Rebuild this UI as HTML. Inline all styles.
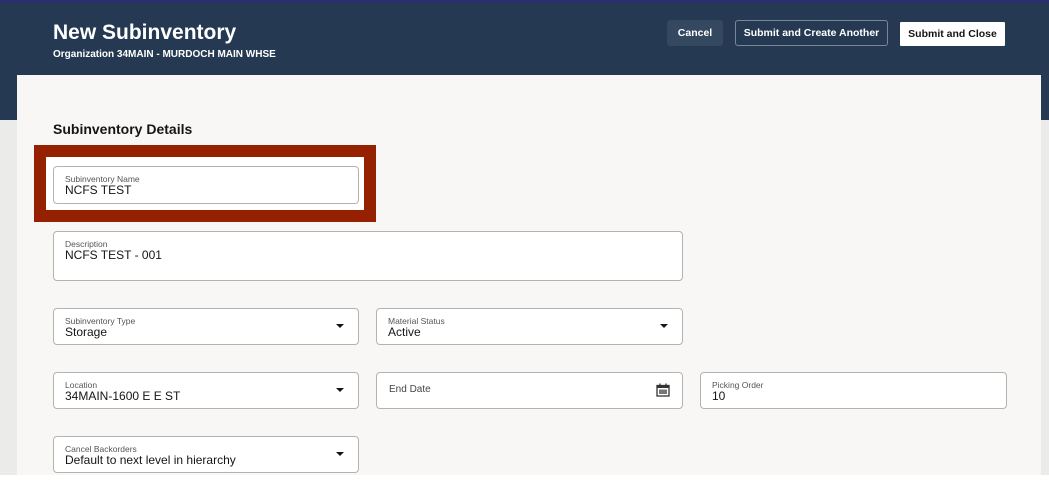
<!DOCTYPE html>
<html><head><meta charset="utf-8"><style>
*{box-sizing:border-box;margin:0;padding:0}
body{width:1049px;height:480px;overflow:hidden;background:#ebebea;font-family:"Liberation Sans",sans-serif;position:relative}
.top{position:absolute;left:0;top:0;width:1049px;height:3px;background:#2b2f72}
.hdr{position:absolute;left:0;top:3px;width:1049px;height:117px;background:#253a52}
.card{position:absolute;left:17px;top:75px;width:1024px;height:400px;background:#f8f7f5}
.bot{position:absolute;left:0;top:475px;width:1049px;height:5px;background:#fff}
h1{position:absolute;left:53px;top:21px;color:#fff;font-size:21px;font-weight:bold}
.org{position:absolute;left:53px;top:49px;color:#fff;font-size:10px;font-weight:bold}
.btn{position:absolute;font-size:10.5px;font-weight:bold;display:flex;align-items:center;justify-content:center;border-radius:3px}
h2{position:absolute;left:53px;top:121px;font-size:14px;font-weight:bold;color:#161513}
.red{position:absolute;left:34px;top:145px;width:342px;height:77px;background:#952100}
.redin{position:absolute;left:46px;top:157px;width:318px;height:53px;background:#fff}
.f{position:absolute;background:#fff;border:1px solid #b5b3b0;border-radius:4px}
.f .l{position:absolute;left:11px;top:7px;font-size:8.5px;color:#555}
.f .v{position:absolute;left:11px;top:16px;font-size:12px;color:#161513}
.f .c{position:absolute;left:12px;top:11px;font-size:10px;color:#444}
.dd{position:absolute;right:14px;top:15px;width:0;height:0;border-left:4px solid transparent;border-right:4px solid transparent;border-top:4px solid #161513}
</style></head><body>
<div class="top"></div><div class="hdr"></div><div class="card"></div><div class="bot"></div>
<h1>New Subinventory</h1>
<div class="org">Organization 34MAIN - MURDOCH MAIN WHSE</div>
<div class="btn" style="left:667px;top:20px;width:56px;height:26px;background:#34495f;color:#fff">Cancel</div>
<div class="btn" style="left:735px;top:20px;width:153px;height:26px;border:1px solid #7b8796;color:#fff">Submit and Create Another</div>
<div class="btn" style="left:900px;top:22px;width:105px;height:24px;background:#fff;color:#161513;border-radius:1px">Submit and Close</div>
<h2>Subinventory Details</h2>
<div class="red"></div><div class="redin"></div>
<div class="f" style="left:53px;top:166px;width:306px;height:38px"><div class="l">Subinventory Name</div><div class="v">NCFS TEST</div></div>
<div class="f" style="left:53px;top:231px;width:630px;height:50px"><div class="l">Description</div><div class="v">NCFS TEST - 001</div></div>
<div class="f" style="left:53px;top:308px;width:306px;height:37px"><div class="l">Subinventory Type</div><div class="v">Storage</div><div class="dd"></div></div>
<div class="f" style="left:376px;top:308px;width:307px;height:37px"><div class="l">Material Status</div><div class="v">Active</div><div class="dd"></div></div>
<div class="f" style="left:53px;top:372px;width:306px;height:37px"><div class="l">Location</div><div class="v">34MAIN-1600 E E ST</div><div class="dd"></div></div>
<div class="f" style="left:376px;top:372px;width:307px;height:37px"><div class="c">End Date</div>
<svg style="position:absolute;right:12px;top:10px" width="14" height="14" viewBox="0 0 14 14"><rect x="1" y="2.5" width="12" height="10.5" fill="none" stroke="#333" stroke-width="1.3"/><rect x="1" y="2.5" width="12" height="2.5" fill="#333"/><line x1="4" y1="0.5" x2="4" y2="3" stroke="#333" stroke-width="1.3"/><line x1="10" y1="0.5" x2="10" y2="3" stroke="#333" stroke-width="1.3"/><rect x="3" y="6.5" width="8" height="4.5" fill="#777"/></svg></div>
<div class="f" style="left:700px;top:372px;width:307px;height:37px"><div class="l">Picking Order</div><div class="v">10</div></div>
<div class="f" style="left:53px;top:436px;width:306px;height:37px"><div class="l">Cancel Backorders</div><div class="v">Default to next level in hierarchy</div><div class="dd"></div></div>
</body></html>
